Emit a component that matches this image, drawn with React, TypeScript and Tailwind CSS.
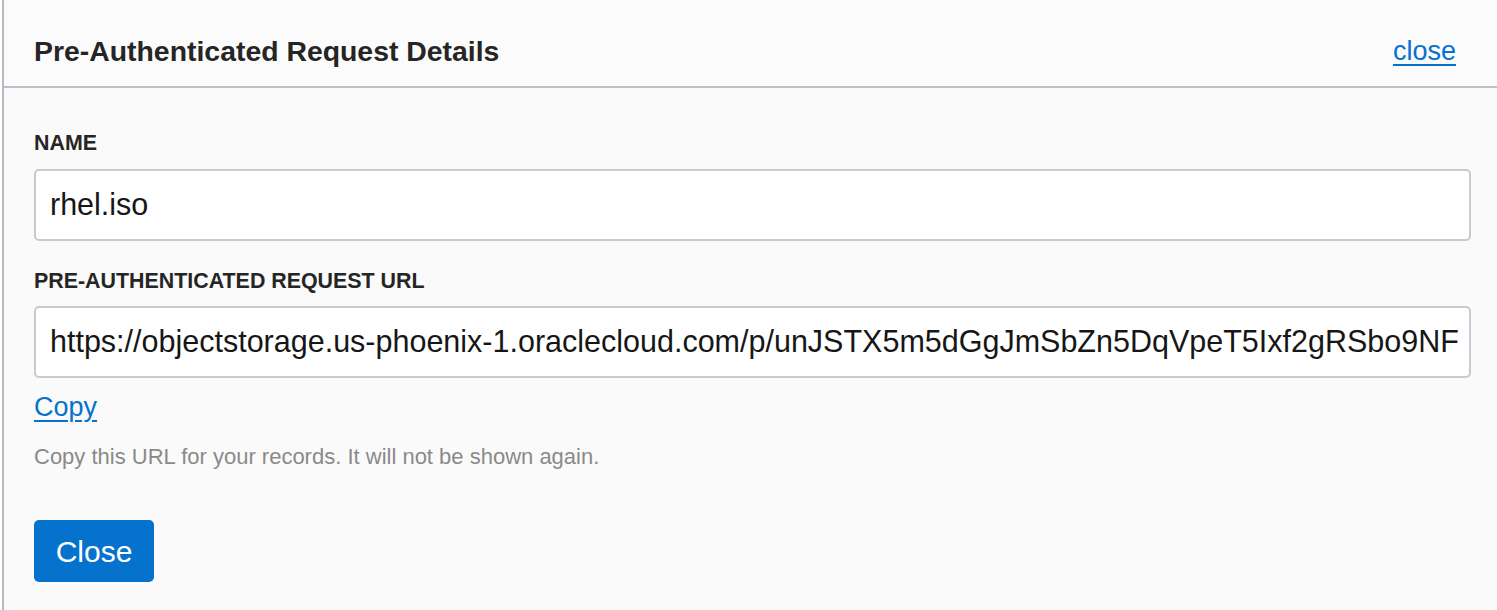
import React from "react";

export default function App() {
  const font = { fontFamily: '"Liberation Sans", Arial, sans-serif' };
  return (
    <div className="w-[1497px] h-[610px] bg-[#fafafa] flex overflow-hidden" style={font}>
      <div className="w-[2px] bg-white" />
      <div className="w-[2px] bg-[#b7bcc4]" />
      <div className="flex-1 flex flex-col">
        <div className="h-[88px] flex items-start justify-between pt-[34px] pl-[30px] pr-[41px] border-b-2 border-[#bcc1c9] bg-[#fbfbfb]">
          <h1 className="text-[28.4px] leading-[34px] font-bold text-[#252525]">Pre-Authenticated Request Details</h1>
          <a href="#" className="text-[27px] leading-[34px] text-[#0572ce] underline underline-offset-[4px]">close</a>
        </div>
        <div className="flex flex-col pl-[30px] pr-[26px]">
          <label className="mt-[43px] text-[21.4px] font-bold text-[#252525] leading-[24px]">NAME</label>
          <div className="mt-[14px] h-[72px] rounded-[5px] border-2 border-[#c6cad1] bg-white flex items-center pl-[14px] text-[30.5px] text-[#161616]">
            rhel.iso
          </div>
          <label className="mt-[28px] text-[21.4px] font-bold text-[#252525] leading-[24px]">PRE-AUTHENTICATED REQUEST URL</label>
          <div className="mt-[13px] h-[72px] rounded-[5px] border-2 border-[#c6cad1] bg-white flex items-center pl-[14px] text-[30.5px] text-[#161616] overflow-hidden whitespace-nowrap">
            https://objectstorage.us-phoenix-1.oraclecloud.com/p/unJSTX5m5dGgJmSbZn5DqVpeT5Ixf2gRSbo9NF
          </div>
          <a href="#" className="mt-[13px] self-start text-[27px] text-[#0572ce] underline underline-offset-[4px] leading-[32px]">Copy</a>
          <p className="mt-[21px] text-[22px] text-[#8a8a8a] leading-[26px]">Copy this URL for your records. It will not be shown again.</p>
          <button className="mt-[50px] self-start w-[120px] h-[62px] rounded-[5px] bg-[#0572ce] text-white text-[30px]">Close</button>
        </div>
      </div>
    </div>
  );
}
